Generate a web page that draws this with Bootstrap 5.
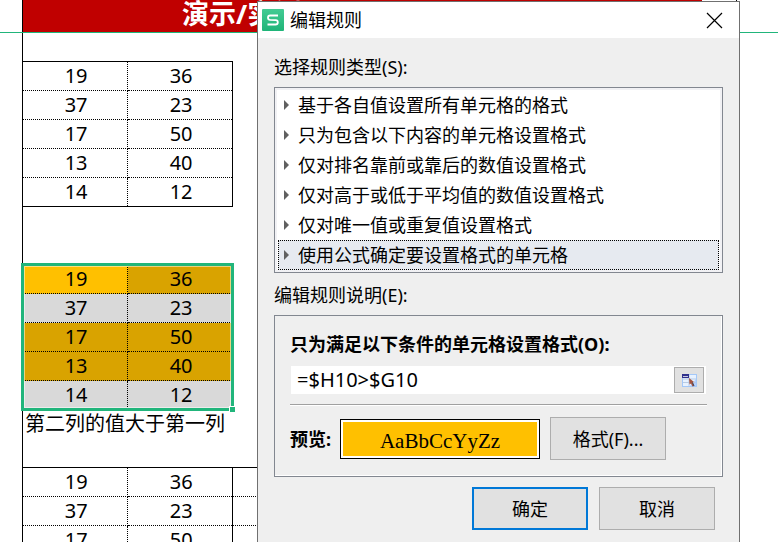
<!DOCTYPE html>
<html lang="zh-CN">
<head>
<meta charset="utf-8">
<meta name="viewport" content="width=device-width, initial-scale=1">
<title>编辑规则</title>
<link href="https://cdn.jsdelivr.net/npm/bootstrap@5.3.0/dist/css/bootstrap.min.css" rel="stylesheet">
<style>
  body { font-family: "Noto Sans", "Noto Sans CJK SC", sans-serif; font-size: 18px; line-height: 24px; color: #000; background: #fff; }
  .workbook { height: 100vh; }
  .banner { height: 33px; border-bottom: 1px solid #21b57b; padding-left: 22px; padding-right: 41px; }
  .banner-edge { border-left: 1px solid #000; border-right: 1px solid #000; padding-right: 34px; }
  .banner-fill { background: #c00000; color: #fff; font-size: 27px; line-height: 28px; font-weight: 700; padding-left: 159px; }
  .cells { margin-left: 22px; border-left: 1px solid #000; padding-top: 28px; height: 100%; font-size: 20px; }
  .grid { border-collapse: collapse; width: 210px; table-layout: fixed; text-align: center; line-height: 28px; border-top: 1px solid #000; border-bottom: 1px solid #000; }
  .grid td { padding: 0 0 0 2px; border: 1px dotted #000; border-left: 0; }
  .grid tr:first-child td { border-top: 1px solid #000; }
  .grid tr:last-child td { border-bottom: 1px solid #000; }
  .grid td:nth-child(2) { border-right: 1px solid #000; }
  .grid-wide { width: 315px; }
  .picked { margin-top: 57px; width: 210px; }
  .picked td { background: #d9d9d9; }
  .picked .hit td { background: #d9a300; }
  .picked .hit td.active-cell { background: #ffc000; }
  .frame { inset: -1px -1px -1px -2px; border: 3px solid #21b57b; box-shadow: inset 0 0 0 1px rgba(255,255,255,.5); }
  .handle { right: -2px; bottom: -2px; width: 6px; height: 6px; background: #21b57b; border: 1px solid #fff; border-width: 1px 0 0 1px; }
  .note { line-height: 28px; margin-bottom: 29px; padding-left: 2px; }

  .dialog-window { left: 257px; right: 38px; top: 1px; min-height: 100vh; background: #efefef; border: 1px solid #707070; }
  .title-row { height: 36px; background: #fff; padding: 0 16px 0 4px; gap: 6px; }
  .close-btn { width: 17px; height: 17px; }
  .form-area { padding: 17px 16px 16px; }
  .rule-list { border: 1px solid #828790; padding: 2px 3px; background: #fff; box-shadow: inset 0 0 0 2px #f1f1f4; margin-bottom: 10px; }
  .rule { height: 30px; width: 100%; border: 1px dotted transparent; background: none; padding: 0 0 0 5px; gap: 9px; color: #000; text-align: left; }
  .rule.chosen { background: #e6eaf0; border-color: #000; }
  .rule svg { width: 5px; height: 10px; }
  .detail { border: 1px solid #828790; box-shadow: inset -1px -1px 0 #fff; padding: 16px 15px; margin-top: 8px; }
  .formula { background: #fff; height: 28px; padding: 1px 2px 1px 0; margin: 10px 1px 10px 1px; }
  .formula input { border: 0; outline: 0; padding: 0 6px; font-size: 20px; background: transparent; color: #000; min-width: 0; }
  .pick-btn { width: 30px; height: 26px; padding: 0; border: 1px solid #adadad; background: #e1e1e1; }
  .divide { border-top: 1px solid #a0a0a0; border-bottom: 1px solid #fff; margin-bottom: 11px; }
  .preview-row { gap: 10px; }
  .preview-label { width: 40px; white-space: nowrap; }
  .sample { width: 200px; height: 40px; border: 1px solid #000; padding: 2px; background: #fff; }
  .sample-fill { background: #ffc000; font-family: "Liberation Serif", serif; font-size: 21px; line-height: 38px; height: 34px; }
  .win-btn { width: 116px; height: 43px; border: 1px solid #adadad; background: #e1e1e1; color: #000; padding: 0; }
  .win-btn.main { border: 2px solid #0078d7; }
  .actions { gap: 11px; padding-right: 8px; margin-top: 10px; }
</style>
</head>
<body class="overflow-hidden">
<main class="workbook position-relative overflow-hidden">
  <header class="banner"><div class="banner-edge h-100"><div class="banner-fill h-100 overflow-hidden">演示/实例</div></div></header>
  <section class="cells">
    <table class="grid">
      <tbody>
        <tr><td>19</td><td>36</td></tr>
        <tr><td>37</td><td>23</td></tr>
        <tr><td>17</td><td>50</td></tr>
        <tr><td>13</td><td>40</td></tr>
        <tr><td>14</td><td>12</td></tr>
      </tbody>
    </table>
    <div class="picked position-relative">
      <table class="grid">
        <tbody>
          <tr class="hit"><td class="active-cell">19</td><td>36</td></tr>
          <tr><td>37</td><td>23</td></tr>
          <tr class="hit"><td>17</td><td>50</td></tr>
          <tr class="hit"><td>13</td><td>40</td></tr>
          <tr><td>14</td><td>12</td></tr>
        </tbody>
      </table>
      <div class="frame position-absolute"></div>
      <div class="handle position-absolute"></div>
    </div>
    <div class="note">第二列的值大于第一列</div>
    <table class="grid grid-wide">
      <tbody>
        <tr><td>19</td><td>36</td><td></td></tr>
        <tr><td>37</td><td>23</td><td></td></tr>
        <tr><td>17</td><td>50</td><td></td></tr>
      </tbody>
    </table>
  </section>

  <div class="dialog-window position-absolute" role="dialog" aria-labelledby="dialogTitle">
    <div class="title-row d-flex align-items-center">
      <svg width="22" height="22" viewBox="0 0 22 22" aria-hidden="true">
        <defs><linearGradient id="leaf" x1="0" y1="0" x2="0" y2="1"><stop offset="0" stop-color="#43cb93"/><stop offset="1" stop-color="#1fb478"/></linearGradient></defs>
        <rect width="22" height="22" rx="1" fill="url(#leaf)"/>
        <path d="M16 6.500H8.200Q6 6.500 6 8.700Q6 10.700 8.200 10.900L13.700 11.200Q15.800 11.400 15.800 13.200Q15.800 15.500 13.500 15.500H5.500" fill="none" stroke="#fff" stroke-width="1.800"/>
      </svg>
      <span id="dialogTitle">编辑规则</span>
      <button type="button" class="close-btn btn p-0 border-0 ms-auto d-flex" aria-label="关闭">
        <svg width="17" height="17" viewBox="0 0 17 17" aria-hidden="true"><path d="M1 1L16 16M16 1L1 16" stroke="#000" stroke-width="1.200"/></svg>
      </button>
    </div>
    <form class="form-area">
      <div id="typeLabel" class="mb-2">选择规则类型(S):</div>
      <div class="rule-list" role="listbox" aria-labelledby="typeLabel">
        <button type="button" role="option" class="rule d-flex align-items-center"><svg viewBox="0 0 5 10"><path d="M0 0L5 5L0 10Z" fill="#606060"/></svg>基于各自值设置所有单元格的格式</button>
        <button type="button" role="option" class="rule d-flex align-items-center"><svg viewBox="0 0 5 10"><path d="M0 0L5 5L0 10Z" fill="#606060"/></svg>只为包含以下内容的单元格设置格式</button>
        <button type="button" role="option" class="rule d-flex align-items-center"><svg viewBox="0 0 5 10"><path d="M0 0L5 5L0 10Z" fill="#606060"/></svg>仅对排名靠前或靠后的数值设置格式</button>
        <button type="button" role="option" class="rule d-flex align-items-center"><svg viewBox="0 0 5 10"><path d="M0 0L5 5L0 10Z" fill="#606060"/></svg>仅对高于或低于平均值的数值设置格式</button>
        <button type="button" role="option" class="rule d-flex align-items-center"><svg viewBox="0 0 5 10"><path d="M0 0L5 5L0 10Z" fill="#606060"/></svg>仅对唯一值或重复值设置格式</button>
        <button type="button" role="option" aria-selected="true" class="rule chosen d-flex align-items-center"><svg viewBox="0 0 5 10"><path d="M0 0L5 5L0 10Z" fill="#606060"/></svg>使用公式确定要设置格式的单元格</button>
      </div>
      <div>编辑规则说明(E):</div>
      <div class="detail">
        <label class="fw-bold d-block" for="formula">只为满足以下条件的单元格设置格式(O):</label>
        <div class="formula d-flex">
          <input id="formula" type="text" class="flex-grow-1" value="=$H10&gt;$G10">
          <button type="button" class="pick-btn d-flex align-items-center justify-content-center" aria-label="选择区域">
            <svg width="15" height="13" viewBox="0 0 15 13" aria-hidden="true">
              <rect x=".5" y=".5" width="14" height="12" fill="#e8f2ff" stroke="#a4c8f8"/>
              <path d="M8 12L14 5V12Z" fill="#b4d0ff"/>
              <path d="M1 5H14M1 8.500H14M7 1V12" stroke="#b8cbe4"/>
              <rect width="7" height="4" fill="#30308c"/>
              <rect x="1" y="2" width="5" height="1" fill="#c8c8dc"/>
              <path d="M7 4L12 8L10.500 8.500L12 12L10.500 12.500L9 9.500L7.500 10.500Z" fill="#a55440"/>
              <path d="M10.500 8.500L12 12" stroke="#404050"/>
            </svg>
          </button>
        </div>
        <div class="divide"></div>
        <div class="preview-row d-flex align-items-center">
          <span class="preview-label fw-bold">预览:</span>
          <div class="sample"><div class="sample-fill text-center">AaBbCcYyZz</div></div>
          <button type="button" class="win-btn">格式(F)...</button>
        </div>
      </div>
      <div class="actions d-flex justify-content-end">
        <button type="submit" class="win-btn main">确定</button>
        <button type="button" class="win-btn">取消</button>
      </div>
    </form>
  </div>
</main>
<script src="https://cdn.jsdelivr.net/npm/bootstrap@5.3.0/dist/js/bootstrap.bundle.min.js"></script>
</body>
</html>
